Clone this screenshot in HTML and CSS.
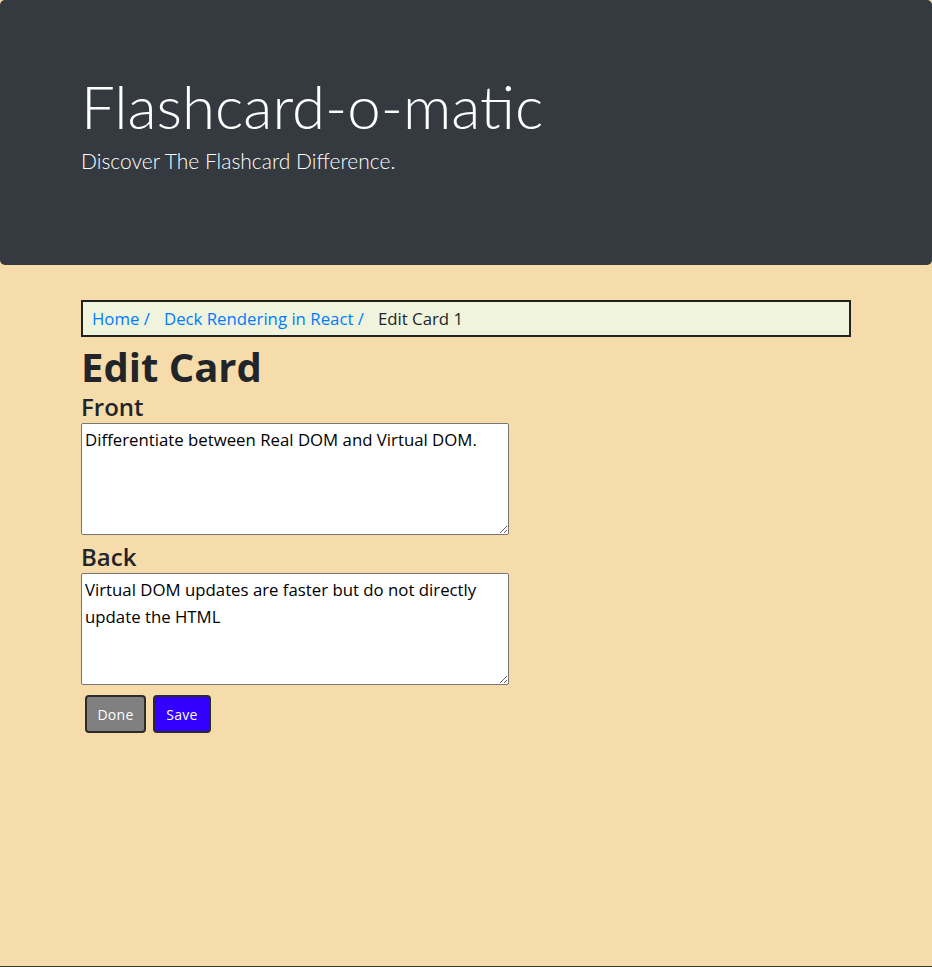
FILE: index.html
```html
<!DOCTYPE html>
<html lang="en">
<head>
<meta charset="utf-8">
<title>Flashcard-o-matic</title>
<link rel="stylesheet" href="styles.css">
</head>
<body>
<header class="jumbotron">
  <div class="container">
    <h1 class="display">Flashcard-o-matic</h1>
    <p class="lead">Discover The Flashcard Difference.</p>
  </div>
</header>
<main class="container">
  <nav class="breadcrumb">
    <a href="#" class="crumb">Home /</a>
    <a href="#" class="crumb">Deck Rendering in React /</a>
    <span class="crumb current">Edit Card 1</span>
  </nav>
  <h1 class="page-title">Edit Card</h1>
  <form class="card-form">
    <label class="field-label" for="front">Front</label>
    <textarea id="front" class="field">Differentiate between Real DOM and Virtual DOM.</textarea>
    <label class="field-label" for="back">Back</label>
    <textarea id="back" class="field">Virtual DOM updates are faster but do not directly update the HTML</textarea>
    <div class="actions">
      <button type="button" class="btn btn-done">Done</button>
      <button type="submit" class="btn btn-save">Save</button>
    </div>
  </form>
</main>
</body>
</html>
```
FILE: styles.css
```css
html, body {
  margin: 0;
  padding: 0;
}
body {
  background: #f7dcab;
  font-family: "Open Sans", "Noto Sans", sans-serif;
  color: #212529;
  box-sizing: border-box;
  border-bottom: 1px solid #3b3a2c;
  height: 967px;
}
.container {
  width: 770px;
  margin: 0 auto;
}
.jumbotron {
  background: #343a40;
  border-radius: 5px;
  height: 265px;
  box-sizing: border-box;
  padding-top: 70px;
  margin-bottom: 35px;
}
.display {
  margin: 0;
  font-family: "Lato", "Open Sans", sans-serif;
  font-weight: 300;
  font-size: 60px;
  line-height: 72px;
  color: #fff;
}
.lead {
  margin: 1.5px 0 0;
  font-family: "Lato", "Open Sans", sans-serif;
  font-weight: 300;
  font-size: 21px;
  line-height: 33px;
  color: #fff;
}
.breadcrumb {
  display: flex;
  gap: 14px;
  align-items: center;
  height: 37px;
  box-sizing: border-box;
  border: 2px solid #222;
  background: #f0f4dc;
  padding: 0 9px;
  font-size: 16.8px;
}
.crumb {
  color: #007bff;
  text-decoration: none;
}
.crumb.current {
  color: #212529;
}
.page-title {
  margin: 7px 0 2px;
  font-size: 40px;
  font-weight: 700;
  line-height: 46px;
}
.card-form {
  display: flex;
  flex-direction: column;
  align-items: flex-start;
}
.field-label {
  font-size: 24px;
  font-weight: 600;
  line-height: 24px;
  margin: 3px 0 4px;
}
.field {
  width: 428px;
  height: 112px;
  box-sizing: border-box;
  border: 1px solid #767676;
  border-radius: 2px;
  padding: 2px 3px;
  font-family: "Open Sans", "Noto Sans", sans-serif;
  font-size: 16.8px;
  line-height: 27px;
  color: #000;
  background: #fff;
  margin: 0 0 7px;
  resize: vertical;
}
.actions {
  display: flex;
  gap: 7px;
  padding-left: 4px;
  margin-top: 3px;
}
.btn {
  height: 38px;
  border: 2px solid #2b2b2b;
  border-radius: 4px;
  color: #fff;
  font-family: "Open Sans", "Noto Sans", sans-serif;
  font-size: 14px;
  letter-spacing: 0.3px;
  padding: 0;
}
.btn-done {
  background: #808080;
  width: 61px;
}
.btn-save {
  background: #3300ff;
  width: 58px;
}
```
